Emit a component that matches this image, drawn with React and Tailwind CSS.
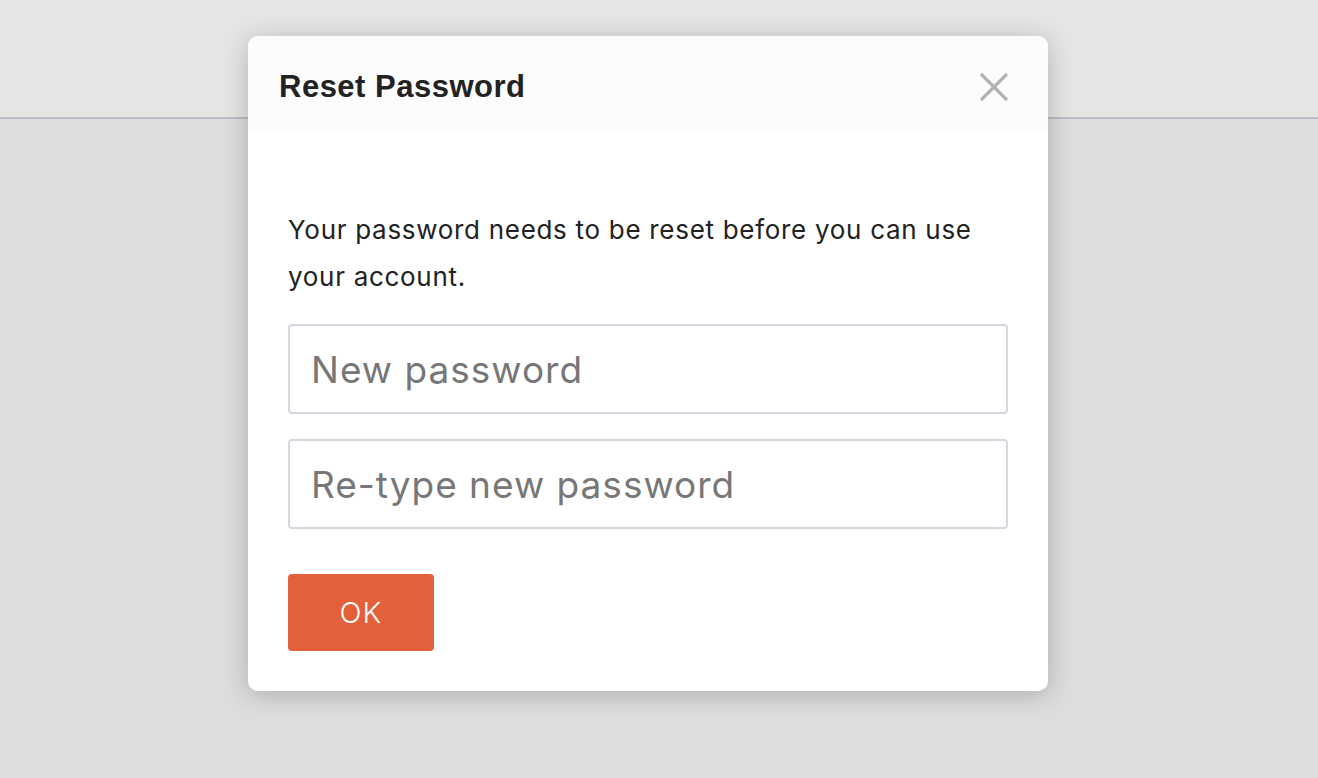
import * as React from "react"

const ResetPassword = () => {
  const [pass, setPass] = React.useState("")
  const [again, setAgain] = React.useState("")

  return (
    <div className="relative w-[1318px] h-[778px] overflow-hidden bg-[#dcdedd]">
      {/* page behind the dialog */}
      <div className="h-[119px] bg-[#e5e5e3] border-b-2 border-[#bcbcc6]" />

      <div className="absolute left-[248px] top-[36px] w-[800px] rounded-[10px] bg-white shadow-[0_4px_24px_rgba(0,0,0,0.22)] overflow-hidden">
        <div className="h-[97px] bg-[#fcfcfc] flex items-center justify-between pt-[5px] pl-[31px] pr-[39px]">
          <h2 className="text-[31px] font-bold text-[#222] tracking-[0.5px] font-['Liberation_Sans',Arial,sans-serif]">
            Reset Password
          </h2>
          <button className="w-[30px] h-[30px] flex items-center justify-center" aria-label="Close">
            <svg width="30" height="30" viewBox="0 0 30 30">
              <path d="M2 2 L28 28 M28 2 L2 28" stroke="#b3b3b3" strokeWidth="3.2" />
            </svg>
          </button>
        </div>

        <div className="px-10 pt-[73px] pb-10 font-['Inter',sans-serif]">
          <p className="text-[26px] leading-[47px] text-[#222] tracking-[0.7px] w-[700px]">
            Your password needs to be reset before you can use your account.
          </p>

          <div className="mt-6 flex flex-col gap-[25px]">
            <input
              type="password"
              placeholder="New password"
              value={pass}
              onChange={(e) => setPass(e.target.value)}
              className="h-[90px] w-[720px] rounded border-2 border-[#d6d6e2] px-[21px] text-[37px] tracking-[1px] text-[#222] placeholder:text-[#777] outline-none"
            />
            <input
              type="password"
              placeholder="Re-type new password"
              value={again}
              onChange={(e) => setAgain(e.target.value)}
              className="h-[90px] w-[720px] rounded border-2 border-[#d6d6e2] px-[21px] text-[37px] tracking-[1px] text-[#222] placeholder:text-[#777] outline-none"
            />
          </div>

          <button className="mt-[45px] w-[146px] h-[77px] rounded bg-[#e3603b] text-white text-[29px] font-light tracking-[1px]">
            OK
          </button>
        </div>
      </div>
    </div>
  )
}

export default ResetPassword
